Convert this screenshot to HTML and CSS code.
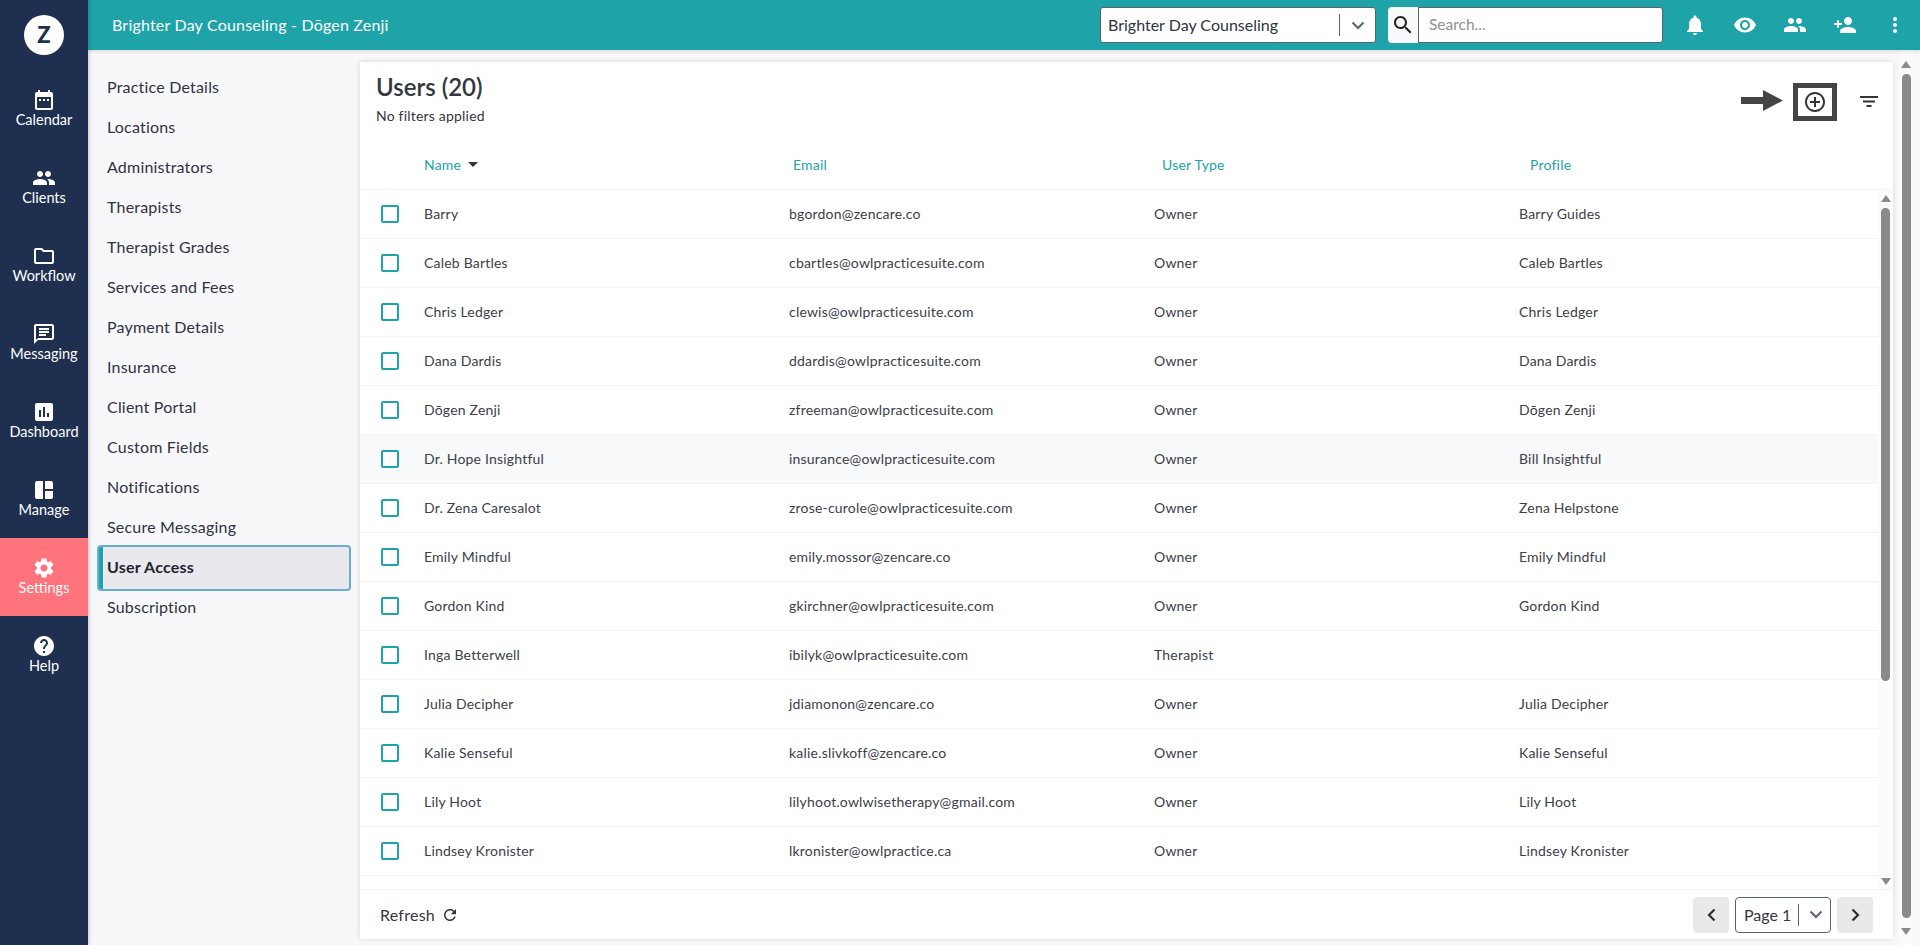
FILE: index.html
```html
<!DOCTYPE html>
<html lang="en">
<head>
<meta charset="utf-8">
<title>User Access</title>
<link rel="stylesheet" href="styles.css">
</head>
<body>
<div class="app">
  <nav class="rail">
    <div class="rail-logo"><span class="logo-disc">Z</span></div>
    <a class="rail-item"><svg class="ico" viewBox="0 0 24 24"><path d="M9 11H7v2h2v-2zm4 0h-2v2h2v-2zm4 0h-2v2h2v-2zm2-7h-1V2h-2v2H8V2H6v2H5c-1.11 0-1.99.9-1.99 2L3 20c0 1.1.89 2 2 2h14c1.1 0 2-.9 2-2V6c0-1.1-.9-2-2-2zm0 16H5V9h14v11z"/></svg><span>Calendar</span></a>
    <a class="rail-item"><svg class="ico" viewBox="0 0 24 24"><path d="M16 11c1.66 0 2.99-1.34 2.99-3S17.66 5 16 5c-1.66 0-3 1.34-3 3s1.34 3 3 3zm-8 0c1.66 0 2.99-1.34 2.99-3S9.66 5 8 5C6.34 5 5 6.34 5 8s1.34 3 3 3zm0 2c-2.33 0-7 1.17-7 3.5V19h14v-2.5c0-2.33-4.67-3.5-7-3.5zm8 0c-.29 0-.62.02-.97.05 1.16.84 1.97 1.97 1.97 3.45V19h6v-2.5c0-2.33-4.67-3.5-7-3.5z"/></svg><span>Clients</span></a>
    <a class="rail-item"><svg class="ico" viewBox="0 0 24 24"><path d="M9.17 6l2 2H20v10H4V6h5.17M10 4H4c-1.1 0-1.99.9-1.99 2L2 18c0 1.1.9 2 2 2h16c1.1 0 2-.9 2-2V8c0-1.1-.9-2-2-2h-8l-2-2z"/></svg><span>Workflow</span></a>
    <a class="rail-item"><svg class="ico" viewBox="0 0 24 24"><path d="M20 2H4c-1.1 0-2 .9-2 2v18l4-4h14c1.1 0 2-.9 2-2V4c0-1.1-.9-2-2-2zm0 14H6l-2 2V4h16v12zM7 9h10v2H7zm0-3h10v2H7zm0 6h7v2H7z"/></svg><span>Messaging</span></a>
    <a class="rail-item"><svg class="ico" viewBox="0 0 24 24"><path d="M19 3H5c-1.1 0-2 .9-2 2v14c0 1.1.9 2 2 2h14c1.1 0 2-.9 2-2V5c0-1.1-.9-2-2-2zM9 17H7v-7h2v7zm4 0h-2V7h2v10zm4 0h-2v-4h2v4z"/></svg><span>Dashboard</span></a>
    <a class="rail-item"><svg class="ico" viewBox="0 0 24 24"><path d="M3 5v14a2 2 0 0 0 2 2h6V3H5a2 2 0 0 0-2 2zm10-2v8h8V5a2 2 0 0 0-2-2zm0 10v8h6a2 2 0 0 0 2-2v-6z"/></svg><span>Manage</span></a>
    <a class="rail-item rail-active"><svg class="ico" viewBox="0 0 24 24"><path d="M19.14 12.94c.04-.3.06-.61.06-.94 0-.32-.02-.64-.07-.94l2.03-1.58c.18-.14.23-.41.12-.61l-1.92-3.32c-.12-.22-.37-.29-.59-.22l-2.39.96c-.5-.38-1.03-.7-1.62-.94l-.36-2.54c-.04-.24-.24-.41-.48-.41h-3.84c-.24 0-.43.17-.47.41l-.36 2.54c-.59.24-1.13.57-1.62.94l-2.39-.96c-.22-.08-.47 0-.59.22L2.74 8.87c-.12.21-.08.47.12.61l2.03 1.58c-.05.3-.09.63-.09.94s.02.64.07.94l-2.03 1.58c-.18.14-.23.41-.12.61l1.92 3.32c.12.22.37.29.59.22l2.39-.96c.5.38 1.03.7 1.62.94l.36 2.54c.05.24.24.41.48.41h3.84c.24 0 .44-.17.47-.41l.36-2.54c.59-.24 1.13-.56 1.62-.94l2.39.96c.22.08.47 0 .59-.22l1.92-3.32c.12-.22.07-.47-.12-.61l-2.01-1.58zM12 15.6c-1.98 0-3.6-1.62-3.6-3.6s1.62-3.6 3.6-3.6 3.6 1.62 3.6 3.6-1.62 3.6-3.6 3.6z"/></svg><span>Settings</span></a>
    <a class="rail-item"><svg class="ico" viewBox="0 0 24 24"><path d="M12 2C6.48 2 2 6.48 2 12s4.48 10 10 10 10-4.48 10-10S17.52 2 12 2zm1 17h-2v-2h2v2zm2.07-7.75l-.9.92C13.45 12.9 13 13.5 13 15h-2v-.5c0-1.1.45-2.1 1.17-2.83l1.24-1.26c.37-.36.59-.86.59-1.41 0-1.1-.9-2-2-2s-2 .9-2 2H8c0-2.21 1.79-4 4-4s4 1.79 4 4c0 .88-.36 1.68-.93 2.25z"/></svg><span>Help</span></a>
  </nav>

  <div class="shell">
    <header class="topbar">
      <div class="topbar-title">Brighter Day Counseling - Dōgen Zenji</div>
      <div class="topbar-tools">
        <div class="picker">
          <span class="picker-text">Brighter Day Counseling</span>
          <span class="picker-sep"></span>
          <svg class="chev" viewBox="0 0 14 9"><path d="M1.5 1.5 7 7l5.5-5.5"/></svg>
        </div>
        <div class="search">
          <span class="search-btn"><svg class="ico-search" viewBox="0 0 24 24"><path d="M15.5 14h-.79l-.28-.27C15.41 12.59 16 11.11 16 9.5 16 5.91 13.09 3 9.5 3S3 5.91 3 9.5 5.91 16 9.5 16c1.61 0 3.09-.59 4.23-1.57l.27.28v.79l5 4.99L20.49 19l-4.99-5zm-6 0C7.01 14 5 11.99 5 9.5S7.01 5 9.5 5 14 7.01 14 9.5 11.99 14 9.5 14z"/></svg></span>
          <span class="search-field">Search...</span>
        </div>
        <div class="top-icons">
          <span class="top-icon"><svg class="ico" viewBox="0 0 24 24"><path d="M12 22c1.1 0 2-.9 2-2h-4c0 1.1.89 2 2 2zm6-6v-5c0-3.07-1.64-5.64-4.5-6.32V4c0-.83-.67-1.5-1.5-1.5s-1.5.67-1.5 1.5v.68C7.63 5.36 6 7.92 6 11v5l-2 2v1h16v-1l-2-2z"/></svg></span>
          <span class="top-icon"><svg class="ico" viewBox="0 0 24 24"><path d="M12 4.5C7 4.5 2.73 7.61 1 12c1.73 4.39 6 7.5 11 7.5s9.27-3.11 11-7.5c-1.73-4.39-6-7.5-11-7.5zM12 17c-2.76 0-5-2.24-5-5s2.24-5 5-5 5 2.24 5 5-2.24 5-5 5zm0-8c-1.66 0-3 1.34-3 3s1.34 3 3 3 3-1.34 3-3-1.34-3-3-3z"/></svg></span>
          <span class="top-icon"><svg class="ico" viewBox="0 0 24 24"><path d="M16 11c1.66 0 2.99-1.34 2.99-3S17.66 5 16 5c-1.66 0-3 1.34-3 3s1.34 3 3 3zm-8 0c1.66 0 2.99-1.34 2.99-3S9.66 5 8 5C6.34 5 5 6.34 5 8s1.34 3 3 3zm0 2c-2.33 0-7 1.17-7 3.5V19h14v-2.5c0-2.33-4.67-3.5-7-3.5zm8 0c-.29 0-.62.02-.97.05 1.16.84 1.97 1.97 1.97 3.45V19h6v-2.5c0-2.33-4.67-3.5-7-3.5z"/></svg></span>
          <span class="top-icon"><svg class="ico" viewBox="0 0 24 24"><path d="M15 12c2.21 0 4-1.79 4-4s-1.79-4-4-4-4 1.79-4 4 1.79 4 4 4zm-9-2V7H4v3H1v2h3v3h2v-3h3v-2H6zm9 4c-2.67 0-8 1.34-8 4v2h16v-2c0-2.66-5.33-4-8-4z"/></svg></span>
          <span class="top-icon"><svg class="ico" viewBox="0 0 24 24"><path d="M12 8c1.1 0 2-.9 2-2s-.9-2-2-2-2 .9-2 2 .9 2 2 2zm0 2c-1.1 0-2 .9-2 2s.9 2 2 2 2-.9 2-2-.9-2-2-2zm0 6c-1.1 0-2 .9-2 2s.9 2 2 2 2-.9 2-2-.9-2-2-2z"/></svg></span>
        </div>
      </div>
    </header>

    <div class="body">
      <aside class="subnav">
        <a class="subnav-item">Practice Details</a>
        <a class="subnav-item">Locations</a>
        <a class="subnav-item">Administrators</a>
        <a class="subnav-item">Therapists</a>
        <a class="subnav-item">Therapist Grades</a>
        <a class="subnav-item">Services and Fees</a>
        <a class="subnav-item">Payment Details</a>
        <a class="subnav-item">Insurance</a>
        <a class="subnav-item">Client Portal</a>
        <a class="subnav-item">Custom Fields</a>
        <a class="subnav-item">Notifications</a>
        <a class="subnav-item">Secure Messaging</a>
        <a class="subnav-item subnav-active">User Access</a>
        <a class="subnav-item">Subscription</a>
      </aside>

      <main class="panel">
        <div class="panel-head">
          <div class="panel-titles">
            <h1 class="panel-title">Users (20)</h1>
            <p class="panel-sub">No filters applied</p>
          </div>
          <div class="panel-actions">
            <svg class="callout-arrow" viewBox="0 0 42 21"><path d="M0 7h22V0l20 10.500L22 21v-7H0z"/></svg>
            <span class="callout-box"><svg class="ico-add" viewBox="0 0 24 24"><path d="M13 7h-2v4H7v2h4v4h2v-4h4v-2h-4V7zm-1-5C6.48 2 2 6.48 2 12s4.48 10 10 10 10-4.48 10-10S17.52 2 12 2zm0 18c-4.41 0-8-3.59-8-8s3.59-8 8-8 8 3.59 8 8-3.59 8-8 8z"/></svg></span>
            <svg class="ico-filter" viewBox="0 0 18 11"><path d="M0 0h18v2H0zM3 4.500h12v2H3zM6.500 9h5v2h-5z"/></svg>
          </div>
        </div>

        <div class="table-head">
          <span></span>
          <span class="th">Name <svg class="sort" viewBox="0 0 10 5"><path d="M0 0h10L5 5z"/></svg></span>
          <span class="th">Email</span>
          <span class="th">User Type</span>
          <span class="th">Profile</span>
        </div>

        <div class="table-body">
          <div class="rows">
            <div class="row"><span class="check"></span><span>Barry</span><span>bgordon@zencare.co</span><span>Owner</span><span>Barry Guides</span></div>
            <div class="row"><span class="check"></span><span>Caleb Bartles</span><span>cbartles@owlpracticesuite.com</span><span>Owner</span><span>Caleb Bartles</span></div>
            <div class="row"><span class="check"></span><span>Chris Ledger</span><span>clewis@owlpracticesuite.com</span><span>Owner</span><span>Chris Ledger</span></div>
            <div class="row"><span class="check"></span><span>Dana Dardis</span><span>ddardis@owlpracticesuite.com</span><span>Owner</span><span>Dana Dardis</span></div>
            <div class="row"><span class="check"></span><span>Dōgen Zenji</span><span>zfreeman@owlpracticesuite.com</span><span>Owner</span><span>Dōgen Zenji</span></div>
            <div class="row row-hover"><span class="check"></span><span>Dr. Hope Insightful</span><span>insurance@owlpracticesuite.com</span><span>Owner</span><span>Bill Insightful</span></div>
            <div class="row"><span class="check"></span><span>Dr. Zena Caresalot</span><span>zrose-curole@owlpracticesuite.com</span><span>Owner</span><span>Zena Helpstone</span></div>
            <div class="row"><span class="check"></span><span>Emily Mindful</span><span>emily.mossor@zencare.co</span><span>Owner</span><span>Emily Mindful</span></div>
            <div class="row"><span class="check"></span><span>Gordon Kind</span><span>gkirchner@owlpracticesuite.com</span><span>Owner</span><span>Gordon Kind</span></div>
            <div class="row"><span class="check"></span><span>Inga Betterwell</span><span>ibilyk@owlpracticesuite.com</span><span>Therapist</span><span></span></div>
            <div class="row"><span class="check"></span><span>Julia Decipher</span><span>jdiamonon@zencare.co</span><span>Owner</span><span>Julia Decipher</span></div>
            <div class="row"><span class="check"></span><span>Kalie Senseful</span><span>kalie.slivkoff@zencare.co</span><span>Owner</span><span>Kalie Senseful</span></div>
            <div class="row"><span class="check"></span><span>Lily Hoot</span><span>lilyhoot.owlwisetherapy@gmail.com</span><span>Owner</span><span>Lily Hoot</span></div>
            <div class="row"><span class="check"></span><span>Lindsey Kronister</span><span>lkronister@owlpractice.ca</span><span>Owner</span><span>Lindsey Kronister</span></div>
          </div>
          <div class="vbar vbar-inner">
            <span class="arrow-up"></span>
            <span class="thumb thumb-inner"></span>
            <span class="vbar-fill"></span>
            <span class="arrow-down"></span>
          </div>
        </div>

        <footer class="panel-foot">
          <div class="refresh">Refresh <svg class="ico-refresh" viewBox="0 0 24 24"><path d="M17.65 6.35C16.2 4.9 14.21 4 12 4c-4.42 0-7.99 3.58-7.99 8s3.57 8 7.99 8c3.73 0 6.84-2.55 7.73-6h-2.08c-.82 2.33-3.04 4-5.65 4-3.31 0-6-2.69-6-6s2.69-6 6-6c1.66 0 3.14.69 4.22 1.78L13 11h7V4l-2.35 2.35z"/></svg></div>
          <div class="pager">
            <span class="pager-btn"><svg class="pager-ico" viewBox="0 0 9 14"><path d="M7.500 1.500 2 7l5.500 5.500"/></svg></span>
            <span class="pager-select"><span>Page 1</span><span class="pager-sep"></span><svg class="chev" viewBox="0 0 14 9"><path d="M1.500 1.500 7 7l5.500-5.500"/></svg></span>
            <span class="pager-btn"><svg class="pager-ico" viewBox="0 0 9 14"><path d="M1.500 1.500 7 7l-5.500 5.500"/></svg></span>
          </div>
        </footer>
      </main>

      <div class="vbar vbar-outer">
        <span class="arrow-up"></span>
        <span class="thumb thumb-outer"></span>
        <span class="arrow-down"></span>
      </div>
    </div>
  </div>
</div>
</body>
</html>
```

FILE: styles.css
```css
* { box-sizing: border-box; }
html, body { margin: 0; height: 945px; overflow: hidden; }
body { font-family: "Lato", "Open Sans", sans-serif; color: #2e3440; background: #f8f8fb; }

.app { display: flex; height: 945px; }
.ico { width: 24px; height: 24px; fill: #fff; display: block; flex: none; }

/* left rail */
.rail { width: 88px; flex: none; background: #1e2f50; display: flex; flex-direction: column; position: relative; z-index: 3; box-shadow: 1px 0 4px rgba(0,0,0,.2); }
.rail-logo { height: 70px; display: flex; justify-content: center; padding-top: 15px; }
.logo-disc { width: 40px; height: 40px; border-radius: 50%; background: #fff; color: #1e2f50; font-size: 22px; font-weight: 900; padding-bottom: 2px; display: flex; align-items: center; justify-content: center; }
.rail-item { height: 78px; padding-top: 18px; display: flex; flex-direction: column; align-items: center; color: #fff; font-size: 14.5px; line-height: 16px; }
.rail-active { background: #ff737c; }

/* top bar */
.shell { flex: 1; min-width: 0; display: flex; flex-direction: column; }
.topbar { height: 50px; flex: none; background: #1ea3a8; display: flex; align-items: center; justify-content: space-between; padding-left: 24px; position: relative; z-index: 2; box-shadow: 0 1px 4px rgba(0,0,0,.15); }
.topbar-title { color: #fff; font-size: 16px; letter-spacing: .2px; padding-bottom: 2px; }
.topbar-tools { display: flex; align-items: center; }
.picker { width: 276px; height: 36px; background: #fff; border: 1px solid #5a6270; border-radius: 3px; display: flex; align-items: center; padding: 0 10px 0 7px; font-size: 16px; }
.picker-text { flex: 1; padding-bottom: 2px; }
.picker-sep { width: 1px; height: 22px; background: #5a6270; margin-right: 11px; }
.chev { width: 14px; height: 9px; fill: none; stroke: #5a6270; stroke-width: 2; flex: none; }
.search { width: 275px; height: 36px; margin-left: 12px; display: flex; }
.search-btn { width: 30px; background: #f8f9fb; border-radius: 4px 0 0 4px; display: flex; align-items: center; justify-content: center; }
.ico-search { width: 24px; height: 24px; fill: #222; }
.search-field { flex: 1; background: #fff; border: 1px solid #5a6270; border-radius: 0 3px 3px 0; padding: 0 0 2px 10px; font-size: 15.500px; color: #8d8f94; display: flex; align-items: center; }
.top-icons { display: flex; margin-left: 7px; }
.top-icon { width: 50px; display: flex; justify-content: center; }

/* body */
.body { flex: 1; min-height: 0; display: flex; }
.subnav { width: 272px; flex: none; padding: 18px 11px 0; display: flex; flex-direction: column; }
.subnav-item { height: 40px; flex: none; padding: 0 0 3px 8px; display: flex; align-items: center; font-size: 16px; letter-spacing: .2px; color: #2e3440; }
.subnav-active { height: 42px; margin: -1px 0; background: #e8e8ed; font-weight: 700; color: #1f2533; border-left: 4px solid #1ea3a8; padding-left: 4px; box-shadow: 0 0 0 2px #6aaed6; border-radius: 2px; }

/* panel */
.panel { width: 1533px; flex: none; margin: 12px 0 6px; background: #fff; display: flex; flex-direction: column; box-shadow: 0 0 5px rgba(0,0,0,.14); }
.panel-head { height: 78px; flex: none; display: flex; justify-content: space-between; padding: 9px 15px 0 16px; }
.panel-title { margin: 0; font-size: 24px; line-height: 32px; font-weight: 600; color: #33373d; }
.panel-sub { margin: 4px 0 0; font-size: 14px; line-height: 18px; letter-spacing: .2px; color: #33373d; }
.panel-actions { display: flex; align-items: flex-start; padding-top: 12px; }
.callout-arrow { width: 42px; height: 21px; margin: 7px 10px 0 0; fill: #444; }
.callout-box { width: 44px; height: 38px; border: 5px solid #444; display: flex; align-items: center; justify-content: center; }
.ico-add { width: 24px; height: 24px; fill: #333; }
.ico-filter { width: 18px; height: 11px; margin: 13px 0 0 23px; fill: #333; }

.table-head { height: 50px; flex: none; display: grid; grid-template-columns: 64px 369px 369px 368px 1fr; align-items: center; border-bottom: 1px solid #f3f3f3; padding-bottom: 1px; }
.th { color: #1ea3a8; font-size: 14px; letter-spacing: .2px; display: flex; align-items: center; gap: 7px; }
.sort { width: 10px; height: 5px; fill: #2e3440; }

.table-body { flex: 1; min-height: 0; display: flex; }
.rows { flex: 1; min-width: 0; }
.row { height: 49px; display: grid; grid-template-columns: 64px 365px 365px 365px 1fr; align-items: center; border-bottom: 1px solid #f3f3f3; font-size: 14px; letter-spacing: .2px; color: #3c4047; padding-bottom: 2px; }
.row-hover { background: #f8f9fa; }
.check { width: 18px; height: 18px; margin: 2px 0 0 21px; border: 2px solid #1ea3a8; border-radius: 2px; background: #fff; }

/* scrollbars */
.vbar { flex: none; display: flex; flex-direction: column; align-items: center; }
.vbar-inner { width: 15px; background: #fcfcfc; padding-top: 5px; padding-bottom: 4px; }
.vbar-outer { width: 14px; margin-left: 6px; background: #fbfbfd; padding-top: 11px; }
.vbar-fill { flex: 1; }
.arrow-up, .arrow-down { width: 0; height: 0; border-left: 5px solid transparent; border-right: 5px solid transparent; flex: none; }
.arrow-up { border-bottom: 7px solid #8a8a8a; }
.arrow-down { border-top: 7px solid #8a8a8a; }
.thumb { width: 9px; background: #8a8a8a; border-radius: 5px; display: block; flex: none; }
.thumb-inner { height: 473px; margin-top: 6px; }
.thumb-outer { height: 844px; margin: 6px 0 10px; }

/* footer */
.panel-foot { height: 50px; flex: none; border-top: 1px solid #f3f3f3; display: flex; align-items: center; justify-content: space-between; padding: 0 20px 0 20px; }
.refresh { display: flex; align-items: center; gap: 6px; font-size: 16px; letter-spacing: .25px; color: #33373d; }
.ico-refresh { width: 18px; height: 18px; fill: #33373d; }
.pager { display: flex; gap: 6px; }
.pager-btn { width: 36px; height: 36px; background: #e9e9e9; border-radius: 4px; display: flex; align-items: center; justify-content: center; }
.pager-ico { width: 9px; height: 14px; fill: none; stroke: #2a2d33; stroke-width: 2.200; }
.pager-select { width: 96px; height: 36px; border: 1px solid #5a6270; border-radius: 4px; display: flex; align-items: center; padding-left: 8px; font-size: 16px; color: #33373d; }
.pager-sep { width: 1px; height: 22px; background: #5a6270; margin: 0 10px 0 7px; }
```
